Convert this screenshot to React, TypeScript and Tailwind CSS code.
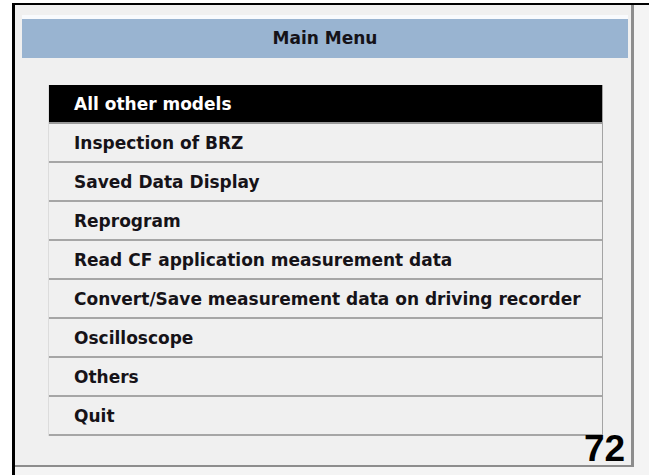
const items = [
  "All other models",
  "Inspection of BRZ",
  "Saved Data Display",
  "Reprogram",
  "Read CF application measurement data",
  "Convert/Save measurement data on driving recorder",
  "Oscilloscope",
  "Others",
  "Quit",
];

export default function App() {
  return (
    <div className="relative w-[649px] h-[475px] bg-white pl-[12px] pt-[3px] overflow-hidden">
      <div className="h-full border-l-[3px] border-t-[2px] border-black bg-[#f4f4f4]">
        {/* window panel */}
        <div className="w-[619px] h-[462px] border-r-[3px] border-b-[2px] border-[#8d8d8d] bg-[#f0f0f0] pt-[10px] pl-[7px] pr-[3px]">
          <div className="border-t-4 border-[#f8fafd]">
            <div className="h-[39px] bg-[#99b4d1] flex items-center justify-center font-['DejaVu_Sans',sans-serif] font-bold text-[17px] text-[#151218]">
              Main Menu
            </div>
          </div>

          {/* menu list */}
          <div className="mt-[27px] ml-[26px] w-[555px] border-l border-r border-l-[#dcdcdc] border-r-[#a4a4a4]">
            {items.map((label, i) => (
              <div
                key={label}
                className={`h-[39px] flex items-center pl-[25px] pt-[3px] border-b-2 font-['DejaVu_Sans',sans-serif] font-bold text-[17px] ${
                  i === 0
                    ? "bg-black text-white border-[#9a9a9a]"
                    : "bg-[#f0f0f0] text-[#161318] border-[#a6a6a6]"
                }`}
              >
                {label}
              </div>
            ))}
          </div>
        </div>
      </div>

      {/* page number */}
      <div className="absolute left-[584px] top-[430px] font-['Liberation_Sans',Arial,sans-serif] font-bold text-[37px] leading-none text-black">
        72
      </div>
    </div>
  );
}
